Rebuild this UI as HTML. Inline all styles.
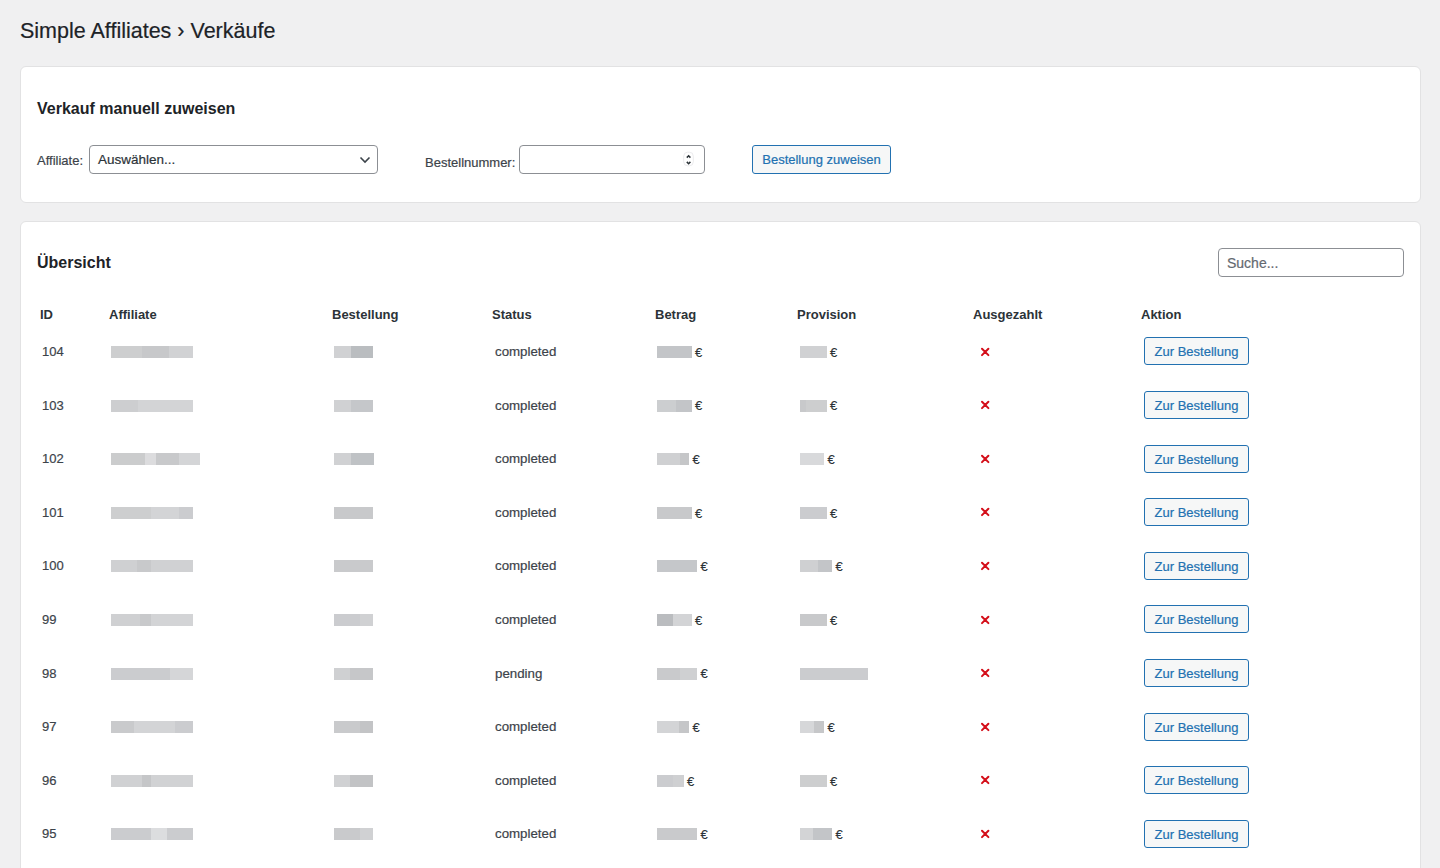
<!DOCTYPE html>
<html><head><meta charset="utf-8"><title>Simple Affiliates › Verkäufe</title><style>
*{box-sizing:border-box;margin:0;padding:0}
html,body{width:1440px;height:868px;overflow:hidden;background:#f0f0f1;font-family:"Liberation Sans", sans-serif;color:#3c434a}
.a{position:absolute;white-space:nowrap}
.r{-webkit-text-stroke:0.2px currentColor}
.card{position:absolute;left:20px;width:1401px;background:#fff;border:1px solid #e2e2e3;border-radius:6px}
.t13{font-size:13px;line-height:13px}
.th{font-size:13px;line-height:13px;font-weight:700;color:#2c3338}
.blur{position:absolute;height:12px}
.eur{font-size:13px;line-height:13px;font-weight:400;color:#2c3338;-webkit-text-stroke:0.15px currentColor}
.btn{position:absolute;border:1px solid #2271b1;border-radius:3px;background:#f6f7f7;color:#2271b1;font-size:13px;text-align:center}
.inp{position:absolute;border:1px solid #8c8f94;border-radius:4px;background:#fff}
.x{position:absolute;width:10px;height:10px}
</style></head>
<body>
<div class="a r" style="left:20px;top:18px;font-size:21.5px;line-height:26px;color:#1d2327">Simple Affiliates › Verkäufe</div>
<div class="card" style="top:66px;height:137px"></div>
<div class="card" style="top:221px;height:700px"></div>
<div class="a" style="left:37px;top:100px;font-size:16px;line-height:18px;font-weight:700;color:#1d2327">Verkauf manuell zuweisen</div>
<div class="a t13 r" style="left:37px;top:154px">Affiliate:</div>
<div class="inp" style="left:89px;top:145px;width:289px;height:29px"></div>
<div class="a r" style="left:98px;top:153px;font-size:13.5px;line-height:14px;color:#2c3338">Auswählen...</div>
<svg class="a" style="left:358px;top:155px" width="14" height="10" viewBox="0 0 14 10"><path d="M2.5 2.5 L7 7 L11.5 2.5" fill="none" stroke="#3c434a" stroke-width="1.6"/></svg>
<div class="a t13 r" style="left:425px;top:156px">Bestellnummer:</div>
<div class="inp" style="left:519px;top:145px;width:186px;height:29px"></div>
<svg class="a" style="left:683px;top:151px" width="11" height="16" viewBox="0 0 11 16"><rect x="0.7" y="1.2" width="9.6" height="13.6" rx="4" fill="none" stroke="#e6e6e8" stroke-width="0.8"/><path d="M3.8 6.6 L5.6 4.8 L7.4 6.6 M3.8 10.9 L5.6 12.7 L7.4 10.9" fill="none" stroke="#2c3338" stroke-width="1.5"/></svg>
<div class="btn r" style="left:752px;top:145px;width:139px;height:29px;line-height:27px">Bestellung zuweisen</div>
<div class="a" style="left:37px;top:254px;font-size:16px;line-height:18px;font-weight:700;color:#1d2327">Übersicht</div>
<div class="inp" style="left:1218px;top:248px;width:186px;height:29px"></div>
<div class="a r" style="left:1227px;top:256px;font-size:14px;line-height:14px;color:#646970">Suche...</div>
<div class="a th" style="left:40px;top:308px">ID</div>
<div class="a th" style="left:109px;top:308px">Affiliate</div>
<div class="a th" style="left:332px;top:308px">Bestellung</div>
<div class="a th" style="left:492px;top:308px">Status</div>
<div class="a th" style="left:655px;top:308px">Betrag</div>
<div class="a th" style="left:797px;top:308px">Provision</div>
<div class="a th" style="left:973px;top:308px">Ausgezahlt</div>
<div class="a th" style="left:1141px;top:308px">Aktion</div>
<div class="a t13 r" style="left:42px;top:345.0px">104</div>
<div class="blur" style="left:111px;top:346.0px;width:82px;background:linear-gradient(90deg,#cdcecf 0.0%,#cdcecf 37.8%,#c7c8ca 37.8%,#c7c8ca 70.73%,#d1d2d4 70.73%,#d1d2d4 100.0%)"></div>
<div class="blur" style="left:334px;top:346.0px;width:39px;background:linear-gradient(90deg,#d0d1d3 0.0%,#d0d1d3 43.59%,#babdc0 43.59%,#babdc0 100.0%)"></div>
<div class="a t13 r" style="left:495px;top:345.0px;font-size:13.3px">completed</div>
<div class="blur" style="left:656.5px;top:346.0px;width:35.0px;background:#c3c5c8"></div>
<div class="a eur" style="left:695.0px;top:345.7px">€</div>
<div class="blur" style="left:799.5px;top:346.0px;width:27.0px;background:#d0d1d3"></div>
<div class="a eur" style="left:830.0px;top:345.7px">€</div>
<svg class="x" style="left:980px;top:346.5px" viewBox="0 0 10 10"><path d="M2 1.7 L8.4 8.1 M8.4 1.7 L2 8.1" stroke="#d40f1a" stroke-width="2" stroke-linecap="round"/></svg>
<div class="btn r" style="left:1144px;top:337.4px;width:105px;height:28px;line-height:27px">Zur Bestellung</div>
<div class="a t13 r" style="left:42px;top:398.6px">103</div>
<div class="blur" style="left:111px;top:399.6px;width:82px;background:linear-gradient(90deg,#cdced0 0.0%,#cdced0 32.93%,#d3d4d6 32.93%,#d3d4d6 100.0%)"></div>
<div class="blur" style="left:334px;top:399.6px;width:39px;background:linear-gradient(90deg,#d0d1d3 0.0%,#d0d1d3 43.59%,#c5c7ca 43.59%,#c5c7ca 100.0%)"></div>
<div class="a t13 r" style="left:495px;top:398.6px;font-size:13.3px">completed</div>
<div class="blur" style="left:656.5px;top:399.6px;width:35.0px;background:linear-gradient(90deg,#ccced0 0.0%,#ccced0 55.71%,#c3c5c8 55.71%,#c3c5c8 100.0%)"></div>
<div class="a eur" style="left:695.0px;top:399.3px">€</div>
<div class="blur" style="left:799.5px;top:399.6px;width:27.0px;background:linear-gradient(90deg,#c8c9cb 0.0%,#c8c9cb 24.07%,#cdcecf 24.07%,#cdcecf 100.0%)"></div>
<div class="a eur" style="left:830.0px;top:399.3px">€</div>
<svg class="x" style="left:980px;top:400.1px" viewBox="0 0 10 10"><path d="M2 1.7 L8.4 8.1 M8.4 1.7 L2 8.1" stroke="#d40f1a" stroke-width="2" stroke-linecap="round"/></svg>
<div class="btn r" style="left:1144px;top:391.0px;width:105px;height:28px;line-height:27px">Zur Bestellung</div>
<div class="a t13 r" style="left:42px;top:452.2px">102</div>
<div class="blur" style="left:111px;top:453.2px;width:89px;background:linear-gradient(90deg,#cbcccd 0.0%,#cbcccd 38.2%,#dcdcde 38.2%,#dcdcde 50.56%,#c8c9cb 50.56%,#c8c9cb 76.4%,#d4d5d7 76.4%,#d4d5d7 100.0%)"></div>
<div class="blur" style="left:334px;top:453.2px;width:40px;background:linear-gradient(90deg,#d0d1d3 0.0%,#d0d1d3 42.5%,#bfc2c5 42.5%,#bfc2c5 100.0%)"></div>
<div class="a t13 r" style="left:495px;top:452.2px;font-size:13.3px">completed</div>
<div class="blur" style="left:656.5px;top:453.2px;width:32.5px;background:linear-gradient(90deg,#cfd0d2 0.0%,#cfd0d2 72.31%,#c5c6c8 72.31%,#c5c6c8 100.0%)"></div>
<div class="a eur" style="left:692.5px;top:452.9px">€</div>
<div class="blur" style="left:799.5px;top:453.2px;width:24.5px;background:#d8d9db"></div>
<div class="a eur" style="left:827.5px;top:452.9px">€</div>
<svg class="x" style="left:980px;top:453.7px" viewBox="0 0 10 10"><path d="M2 1.7 L8.4 8.1 M8.4 1.7 L2 8.1" stroke="#d40f1a" stroke-width="2" stroke-linecap="round"/></svg>
<div class="btn r" style="left:1144px;top:444.6px;width:105px;height:28px;line-height:27px">Zur Bestellung</div>
<div class="a t13 r" style="left:42px;top:505.8px">101</div>
<div class="blur" style="left:111px;top:506.79999999999995px;width:82px;background:linear-gradient(90deg,#cdcecf 0.0%,#cdcecf 48.78%,#d3d4d6 48.78%,#d3d4d6 82.93%,#cbcccf 82.93%,#cbcccf 100.0%)"></div>
<div class="blur" style="left:334px;top:506.79999999999995px;width:39px;background:#c8c9cb"></div>
<div class="a t13 r" style="left:495px;top:505.8px;font-size:13.3px">completed</div>
<div class="blur" style="left:656.5px;top:506.79999999999995px;width:35.0px;background:#c8c9cb"></div>
<div class="a eur" style="left:695.0px;top:506.5px">€</div>
<div class="blur" style="left:799.5px;top:506.79999999999995px;width:27.0px;background:#cbcccf"></div>
<div class="a eur" style="left:830.0px;top:506.5px">€</div>
<svg class="x" style="left:980px;top:507.3px" viewBox="0 0 10 10"><path d="M2 1.7 L8.4 8.1 M8.4 1.7 L2 8.1" stroke="#d40f1a" stroke-width="2" stroke-linecap="round"/></svg>
<div class="btn r" style="left:1144px;top:498.2px;width:105px;height:28px;line-height:27px">Zur Bestellung</div>
<div class="a t13 r" style="left:42px;top:559.4px">100</div>
<div class="blur" style="left:111px;top:560.4px;width:82px;background:linear-gradient(90deg,#cfd0d2 0.0%,#cfd0d2 31.71%,#c8c9cb 31.71%,#c8c9cb 48.78%,#d0d1d3 48.78%,#d0d1d3 100.0%)"></div>
<div class="blur" style="left:334px;top:560.4px;width:39px;background:#c9cacc"></div>
<div class="a t13 r" style="left:495px;top:559.4px;font-size:13.3px">completed</div>
<div class="blur" style="left:656.5px;top:560.4px;width:40.5px;background:#c5c7ca"></div>
<div class="a eur" style="left:700.5px;top:560.1px">€</div>
<div class="blur" style="left:799.5px;top:560.4px;width:32.5px;background:linear-gradient(90deg,#cfd0d2 0.0%,#cfd0d2 56.92%,#c3c5c8 56.92%,#c3c5c8 100.0%)"></div>
<div class="a eur" style="left:835.5px;top:560.1px">€</div>
<svg class="x" style="left:980px;top:560.9px" viewBox="0 0 10 10"><path d="M2 1.7 L8.4 8.1 M8.4 1.7 L2 8.1" stroke="#d40f1a" stroke-width="2" stroke-linecap="round"/></svg>
<div class="btn r" style="left:1144px;top:551.8px;width:105px;height:28px;line-height:27px">Zur Bestellung</div>
<div class="a t13 r" style="left:42px;top:613.0px">99</div>
<div class="blur" style="left:111px;top:614.0px;width:82px;background:linear-gradient(90deg,#cfd0d2 0.0%,#cfd0d2 35.37%,#c8c9cb 35.37%,#c8c9cb 48.78%,#d3d4d6 48.78%,#d3d4d6 100.0%)"></div>
<div class="blur" style="left:334px;top:614.0px;width:39px;background:linear-gradient(90deg,#cbcccf 0.0%,#cbcccf 66.67%,#d0d1d3 66.67%,#d0d1d3 100.0%)"></div>
<div class="a t13 r" style="left:495px;top:613.0px;font-size:13.3px">completed</div>
<div class="blur" style="left:656.5px;top:614.0px;width:35.0px;background:linear-gradient(90deg,#babcbf 0.0%,#babcbf 44.29%,#d3d4d6 44.29%,#d3d4d6 100.0%)"></div>
<div class="a eur" style="left:695.0px;top:613.7px">€</div>
<div class="blur" style="left:799.5px;top:614.0px;width:27.0px;background:#c8c9cb"></div>
<div class="a eur" style="left:830.0px;top:613.7px">€</div>
<svg class="x" style="left:980px;top:614.5px" viewBox="0 0 10 10"><path d="M2 1.7 L8.4 8.1 M8.4 1.7 L2 8.1" stroke="#d40f1a" stroke-width="2" stroke-linecap="round"/></svg>
<div class="btn r" style="left:1144px;top:605.4px;width:105px;height:28px;line-height:27px">Zur Bestellung</div>
<div class="a t13 r" style="left:42px;top:666.6px">98</div>
<div class="blur" style="left:111px;top:667.6px;width:82px;background:linear-gradient(90deg,#cbcccf 0.0%,#cbcccf 71.95%,#d5d6d8 71.95%,#d5d6d8 100.0%)"></div>
<div class="blur" style="left:334px;top:667.6px;width:39px;background:linear-gradient(90deg,#cfd0d2 0.0%,#cfd0d2 41.03%,#c6c7c9 41.03%,#c6c7c9 100.0%)"></div>
<div class="a t13 r" style="left:495px;top:666.6px;font-size:13.3px">pending</div>
<div class="blur" style="left:656.5px;top:667.6px;width:40.5px;background:linear-gradient(90deg,#c9cacc 0.0%,#c9cacc 58.02%,#cfd0d2 58.02%,#cfd0d2 100.0%)"></div>
<div class="a eur" style="left:700.5px;top:667.3px">€</div>
<div class="blur" style="left:799.5px;top:667.6px;width:68.0px;background:#cbcccf"></div>
<svg class="x" style="left:980px;top:668.1px" viewBox="0 0 10 10"><path d="M2 1.7 L8.4 8.1 M8.4 1.7 L2 8.1" stroke="#d40f1a" stroke-width="2" stroke-linecap="round"/></svg>
<div class="btn r" style="left:1144px;top:659.0px;width:105px;height:28px;line-height:27px">Zur Bestellung</div>
<div class="a t13 r" style="left:42px;top:720.2px">97</div>
<div class="blur" style="left:111px;top:721.2px;width:82px;background:linear-gradient(90deg,#c9cacc 0.0%,#c9cacc 28.05%,#d3d4d6 28.05%,#d3d4d6 78.05%,#cbcccf 78.05%,#cbcccf 100.0%)"></div>
<div class="blur" style="left:334px;top:721.2px;width:39px;background:linear-gradient(90deg,#c9cacc 0.0%,#c9cacc 66.67%,#c3c4c6 66.67%,#c3c4c6 100.0%)"></div>
<div class="a t13 r" style="left:495px;top:720.2px;font-size:13.3px">completed</div>
<div class="blur" style="left:656.5px;top:721.2px;width:32.5px;background:linear-gradient(90deg,#d3d4d6 0.0%,#d3d4d6 69.23%,#c5c6c8 69.23%,#c5c6c8 100.0%)"></div>
<div class="a eur" style="left:692.5px;top:720.9px">€</div>
<div class="blur" style="left:799.5px;top:721.2px;width:24.5px;background:linear-gradient(90deg,#d6d7d9 0.0%,#d6d7d9 59.18%,#c6c7c9 59.18%,#c6c7c9 100.0%)"></div>
<div class="a eur" style="left:827.5px;top:720.9px">€</div>
<svg class="x" style="left:980px;top:721.7px" viewBox="0 0 10 10"><path d="M2 1.7 L8.4 8.1 M8.4 1.7 L2 8.1" stroke="#d40f1a" stroke-width="2" stroke-linecap="round"/></svg>
<div class="btn r" style="left:1144px;top:712.6px;width:105px;height:28px;line-height:27px">Zur Bestellung</div>
<div class="a t13 r" style="left:42px;top:773.8px">96</div>
<div class="blur" style="left:111px;top:774.8px;width:82px;background:linear-gradient(90deg,#d0d1d3 0.0%,#d0d1d3 37.8%,#c5c6c8 37.8%,#c5c6c8 48.78%,#d1d2d4 48.78%,#d1d2d4 100.0%)"></div>
<div class="blur" style="left:334px;top:774.8px;width:39px;background:linear-gradient(90deg,#d0d1d3 0.0%,#d0d1d3 41.03%,#c2c3c5 41.03%,#c2c3c5 100.0%)"></div>
<div class="a t13 r" style="left:495px;top:773.8px;font-size:13.3px">completed</div>
<div class="blur" style="left:656.5px;top:774.8px;width:27.0px;background:linear-gradient(90deg,#cbcccf 0.0%,#cbcccf 57.41%,#cfd0d2 57.41%,#cfd0d2 100.0%)"></div>
<div class="a eur" style="left:687.0px;top:774.5px">€</div>
<div class="blur" style="left:799.5px;top:774.8px;width:27.0px;background:#cdcecf"></div>
<div class="a eur" style="left:830.0px;top:774.5px">€</div>
<svg class="x" style="left:980px;top:775.3px" viewBox="0 0 10 10"><path d="M2 1.7 L8.4 8.1 M8.4 1.7 L2 8.1" stroke="#d40f1a" stroke-width="2" stroke-linecap="round"/></svg>
<div class="btn r" style="left:1144px;top:766.2px;width:105px;height:28px;line-height:27px">Zur Bestellung</div>
<div class="a t13 r" style="left:42px;top:827.4px">95</div>
<div class="blur" style="left:111px;top:828.4px;width:82px;background:linear-gradient(90deg,#cbcccf 0.0%,#cbcccf 48.78%,#dcdddf 48.78%,#dcdddf 68.29%,#cbcccf 68.29%,#cbcccf 100.0%)"></div>
<div class="blur" style="left:334px;top:828.4px;width:39px;background:linear-gradient(90deg,#c9cacc 0.0%,#c9cacc 66.67%,#d0d1d3 66.67%,#d0d1d3 100.0%)"></div>
<div class="a t13 r" style="left:495px;top:827.4px;font-size:13.3px">completed</div>
<div class="blur" style="left:656.5px;top:828.4px;width:40.5px;background:#c9cacc"></div>
<div class="a eur" style="left:700.5px;top:828.1px">€</div>
<div class="blur" style="left:799.5px;top:828.4px;width:32.5px;background:linear-gradient(90deg,#d3d4d6 0.0%,#d3d4d6 41.54%,#c3c5c8 41.54%,#c3c5c8 100.0%)"></div>
<div class="a eur" style="left:835.5px;top:828.1px">€</div>
<svg class="x" style="left:980px;top:828.9px" viewBox="0 0 10 10"><path d="M2 1.7 L8.4 8.1 M8.4 1.7 L2 8.1" stroke="#d40f1a" stroke-width="2" stroke-linecap="round"/></svg>
<div class="btn r" style="left:1144px;top:819.8px;width:105px;height:28px;line-height:27px">Zur Bestellung</div>
</body></html>
